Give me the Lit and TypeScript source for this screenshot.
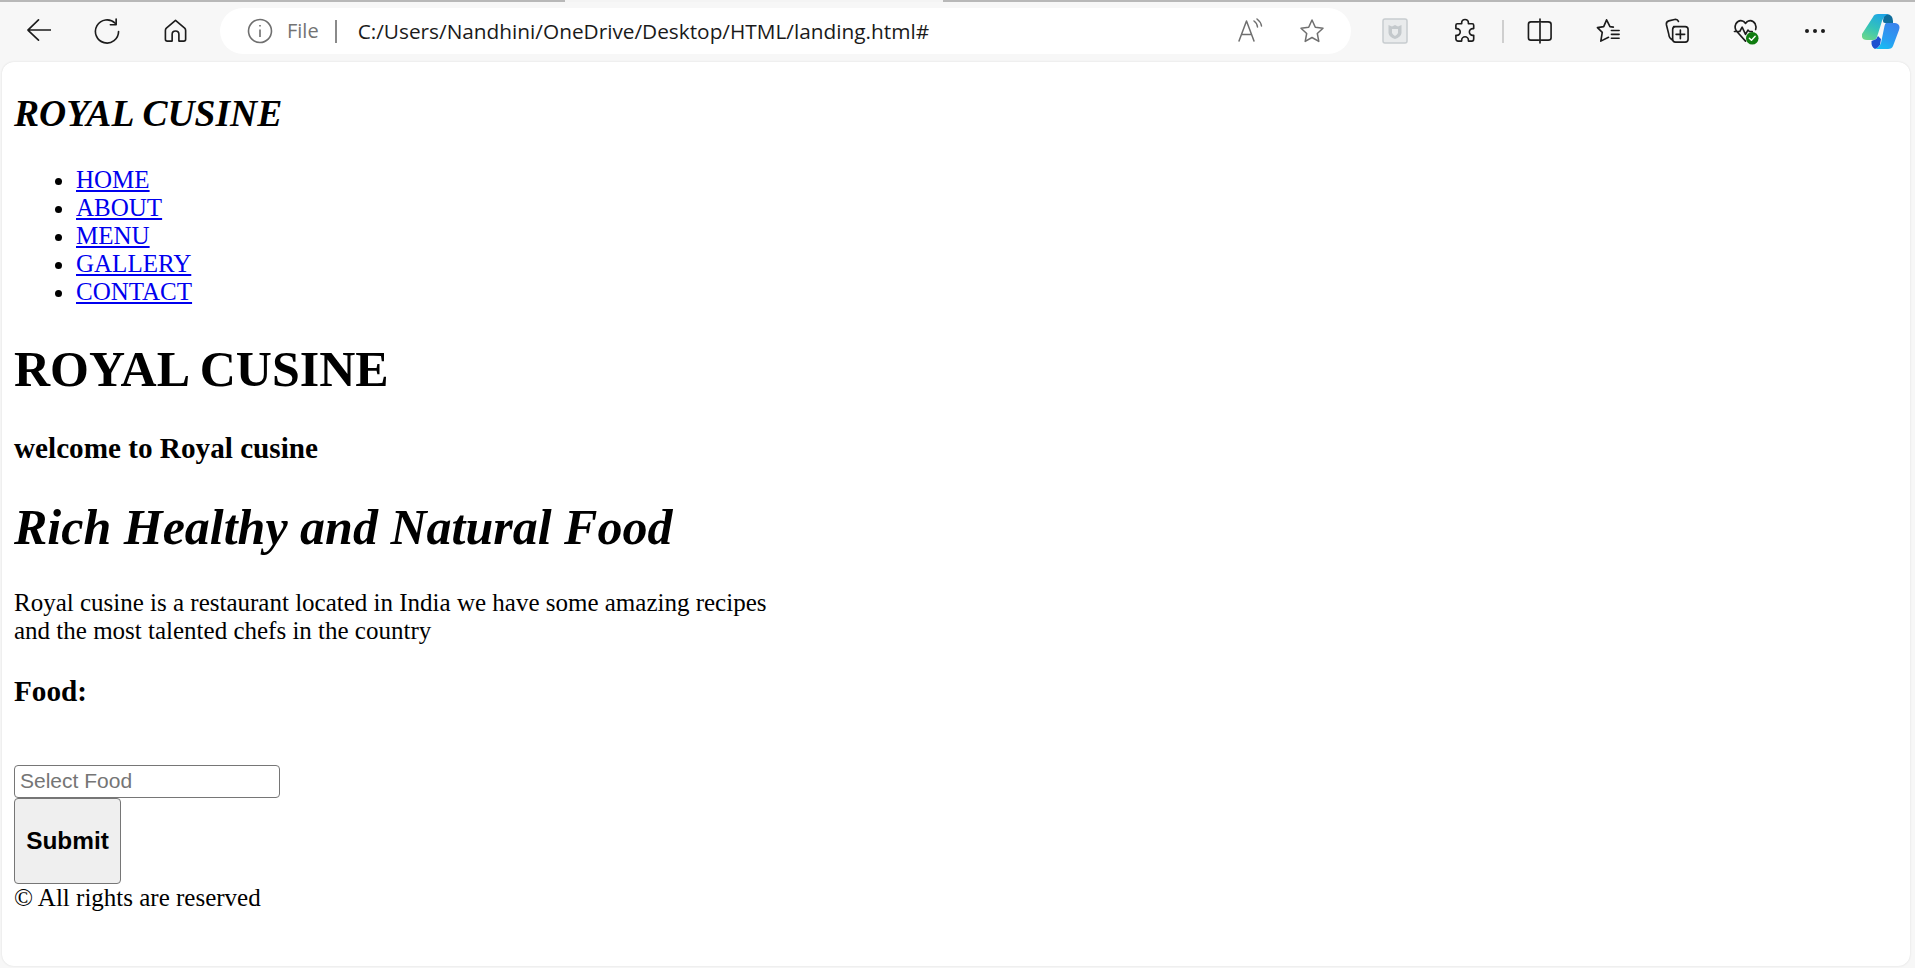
import { html, css, LitElement, svg } from 'lit';
import { customElement } from 'lit/decorators.js';

const ICONS = {
  back: svg`<path d="M27 12.500H3M14 2 3 12.500 14 23" />`,
  refresh: svg`<path d="M22 5.500A12 12 0 1 0 25.500 14" /><path d="M23 1v6h-6" />`,
  home: svg`<path d="M13 2.500 3.500 10.500Q2.500 11.500 2.500 13V22q0 2 2 2H9.500V17q0-3.500 3.500-3.500T16.500 17v7H21.500q2 0 2-2V13q0-1.500-1-2.500Z" />`,
  star: svg`<path d="m13 2 3.300 7.300 7.700 .9-5.700 5.300 1.500 7.900L13 19.500l-6.800 3.900 1.500-7.900L2 10.200l7.700-.9Z" />`,
  puzzle: svg`<path d="M9 5a3.500 3.500 0 0 1 7 0v1h4q1.500 0 1.500 1.500V11h-1a3.500 3.500 0 0 0 0 7h1v3.500Q21.500 24 19.500 24H16v-1a3.500 3.500 0 0 0-7 0v1H5.500Q3 24 3 21.500V18h1a3.500 3.500 0 0 0 0-7H3V7.500Q3 6 4.500 6H9Z" />`,
  split: svg`<path d="M12 4H4Q1.500 4 1.500 6.500V20.500Q1.500 23 4 23H12M15 4H22Q25 4 25 6.500V20.500Q25 23 22 23H15M13.500 1V26" />`,
  favorites: svg`<path d="M11 2 14.500 9 18 9.500M11 2 8 9 1.500 10 6.500 15 5 24 13 20M16 13h8M16 17h8M16 21h8" />`,
  collections: svg`<path d="M5 17 2.500 7Q2 4 5 3L11 1.500Q14 1 15 3.500M9 23Q5 21 5 17M10 9H22Q25 9 25 12V22Q25 25 22 25H12Q9 25 9 22V12Q9 9 12 9ZM17 12.500V21.500M12.500 17H21.500" />`,
  health: svg`<path d="M13 24 4 14Q1 10 3 6 6 1 11 3.500L13 5.500 15 3.500Q20 1 23 6 24.500 9 23.500 12M1.500 14H7L9.500 9.500 13 17 15.500 12.500 17 14H20" />`,
};

@customElement('app-root')
export class AppRoot extends LitElement {

  static styles = [css`
    :host {
      display: block;
      height: 968px;
      background: #f7f7f7;
      overflow: hidden;
      font-family: "Liberation Serif", serif;
      font-size: 25px;
      line-height: 28px;
      color: #000;
    }

    .strip {
      display: flex;
      height: 2px;
      background: #b8b8b8;
    }

    .strip span {
      width: 378px;
      margin-left: 565px;
      background: #f4f4f4;
    }

    .toolbar {
      display: flex;
      align-items: center;
      height: 60px;
      padding: 0 6px 2px 3px;
      box-sizing: border-box;
    }

    .btn {
      flex: none;
      display: flex;
      justify-content: center;
      align-items: center;
      width: 69px;
      height: 46px;
    }

    .btn svg {
      width: 26px;
      height: 26px;
      fill: none;
      stroke: #1c1c1c;
      stroke-width: 1.7;
      stroke-linejoin: round;
      stroke-linecap: round;
    }

    .address {
      flex: none;
      display: flex;
      align-items: center;
      width: 1131px;
      height: 46px;
      margin: 0 9px 0 10px;
      padding-left: 27px;
      box-sizing: border-box;
      background: #fff;
      border-radius: 23px;
      font-family: "Open Sans", sans-serif;
      font-size: 20px;
    }

    .info {
      width: 26px;
      height: 26px;
      fill: none;
      stroke: #6f6f6f;
      stroke-width: 1.6;
    }

    .file {
      margin-left: 14px;
      color: #737373;
    }

    .divider {
      width: 2px;
      height: 23px;
      margin: 0 21px 0 16px;
      background: #8a8a8a;
    }

    .url {
      flex: 1;
      font-size: 20.8px;
      color: #1a1a1a;
    }

    .address .btn svg {
      stroke: #6f6f6f;
      stroke-width: 1.5;
    }

    .address .read {
      width: 62px;
    }

    .address .fav {
      width: 62px;
      margin-right: 8px;
    }

    .puzzle {
      margin-left: 2px;
    }

    .coll {
      margin-left: -1px;
    }

    .sep {
      flex: none;
      width: 2px;
      height: 23px;
      margin: 0 1px 0 2px;
      background: #cfcfcf;
    }

    .dots {
      display: flex;
      gap: 4px;
    }

    .dots i {
      width: 4px;
      height: 4px;
      border-radius: 50%;
      background: #1c1c1c;
    }

    .pilot {
      margin-left: -3px;
    }

    .btn .copilot {
      width: 38px;
      height: 35px;
      stroke: none;
      fill: initial;
    }

    .btn .shield {
      stroke: none;
    }

    .btn .health {
      overflow: visible;
    }

    .page {
      height: 904px;
      margin: 0 5px 0 2px;
      padding: 0 12px;
      overflow: hidden;
      background: #fff;
      border-radius: 12px;
      box-shadow: 0 0 2px #d8d8d8;
    }

    h2 {
      margin: 30px 0 31px;
      font-size: 37.6px;
      line-height: 43px;
      font-style: italic;
    }

    ul {
      margin: 0;
      padding-left: 62px;
    }

    a {
      color: #0000ee;
    }

    h1 {
      margin: 35px 0 0;
      font-size: 50px;
      line-height: 57px;
    }

    h1.tag {
      margin: 33.500px 0 33px;
      font-style: italic;
    }

    h3 {
      margin: 33px 0 0;
      font-size: 29.2px;
      line-height: 34px;
    }

    h3.food {
      margin-top: 29px;
    }

    p {
      width: 775px;
      margin: 0;
    }

    input {
      display: block;
      width: 266px;
      height: 33px;
      margin: 57px 0 0;
      padding: 1px 5px;
      box-sizing: border-box;
      border: 1.500px solid #767676;
      border-radius: 4px;
      font-family: "Liberation Sans", sans-serif;
      font-size: 21px;
    }

    button {
      display: block;
      width: 107px;
      height: 86px;
      padding: 0;
      background: #efefef;
      border: 1.500px solid #767676;
      border-radius: 4px;
      font-family: "Liberation Sans", sans-serif;
      font-size: 24.4px;
      font-weight: bold;
      color: #000;
    }
  `]

  icon(name: keyof typeof ICONS, cls = '') {
    return html`<div class="btn ${cls}"><svg viewBox="0 0 27 27">${ICONS[name]}</svg></div>`;
  }

  render() {
    const links = ['HOME', 'ABOUT', 'MENU', 'GALLERY', 'CONTACT'];
    return html`
      <div class="strip"><span></span></div>
      <div class="toolbar">
        ${this.icon('back')}
        ${this.icon('refresh')}
        ${this.icon('home')}
        <div class="address">
          <svg class="info" viewBox="0 0 26 26">
            <circle cx="13" cy="13" r="11.500" />
            <path d="M13 11.500V19M13 7V8.500" />
          </svg>
          <span class="file">File</span>
          <span class="divider"></span>
          <span class="url">C:/Users/Nandhini/OneDrive/Desktop/HTML/landing.html#</span>
          <div class="btn read">
            <svg viewBox="0 0 26 26">
              <path d="M2 23 9.500 3 17 23M4.500 16.500H14.500M17 3Q20 5 20.500 9M20 1Q24 4 24.500 8" />
            </svg>
          </div>
          <div class="btn fav"><svg viewBox="0 0 26 26">${ICONS.star}</svg></div>
        </div>
        <div class="btn">
          <svg class="shield" viewBox="0 0 26 26">
            <rect x="1" y="1" width="24" height="24" rx="2" fill="#e9ebec" stroke="#c8cdd0" stroke-width="1.500" />
            <path d="M6.500 7 10 8.500 13 7 16 8.500 19.500 7V15Q19 19 13 21 7 19 6.500 15Z" fill="#c4c9cc" />
            <path d="M10 11H16V15Q15 17 13 18 11 17 10 15Z" fill="#e9ebec" />
          </svg>
        </div>
        ${this.icon('puzzle', 'puzzle')}
        <span class="sep"></span>
        ${this.icon('split')}
        ${this.icon('favorites')}
        ${this.icon('collections', 'coll')}
        <div class="btn">
          <svg class="health" viewBox="0 0 27 27">
            ${ICONS.health}
            <circle cx="20" cy="21" r="6.500" fill="#107c10" stroke="none" />
            <path d="M17 21 19.200 23.200 23 19" stroke="#fff" stroke-width="1.500" />
          </svg>
        </div>
        <div class="btn"><div class="dots"><i></i><i></i><i></i></div></div>
        <div class="btn pilot">
          <svg class="copilot" viewBox="0 0 38 35">
            <defs>
              <linearGradient id="cl" x1="0.700" y1="0" x2="0.200" y2="1">
                <stop offset="0" stop-color="#1ea6e6" />
                <stop offset="0.550" stop-color="#35c3b8" />
                <stop offset="1" stop-color="#6bd68a" />
              </linearGradient>
              <linearGradient id="cr" x1="0.800" y1="0" x2="0.300" y2="1">
                <stop offset="0" stop-color="#3b82ec" />
                <stop offset="0.600" stop-color="#2a9cf2" />
                <stop offset="1" stop-color="#17bdf2" />
              </linearGradient>
            </defs>
            <path d="M22 0H25Q31 1 31 7V9H23Q21 9 21 7Z" fill="#0f6d9c" />
            <path d="M11 3Q12 0 16 0H27Q22 1 20 7L15 23Q14 26 11 26H5Q-1 26 0 20Z" fill="url(#cl)" />
            <path d="M12 26Q15 25 16 22L19 25 18 31Q16 34 13 35 9 33 9.500 27Z" fill="#1d4fd0" />
            <path d="M24 9H33Q39 10 37 16L31 32Q30 35 26 35H13Q17 34 19 29L22.500 12Q23 9.500 24 9Z" fill="url(#cr)" />
          </svg>
        </div>
      </div>
      <div class="page">
        <h2>ROYAL CUSINE</h2>
        <ul>
          ${links.map((l) => html`<li><a href="#">${l}</a></li>`)}
        </ul>
        <h1>ROYAL CUSINE</h1>
        <h3>welcome to Royal cusine</h3>
        <h1 class="tag">Rich Healthy and Natural Food</h1>
        <p>Royal cusine is a restaurant located in India we have some amazing recipes and the most talented chefs in the country</p>
        <h3 class="food">Food:</h3>
        <form>
          <input placeholder="Select Food" />
          <button type="button">Submit</button>
        </form>
        <div>© All rights are reserved</div>
      </div>
    `;
  }
}
